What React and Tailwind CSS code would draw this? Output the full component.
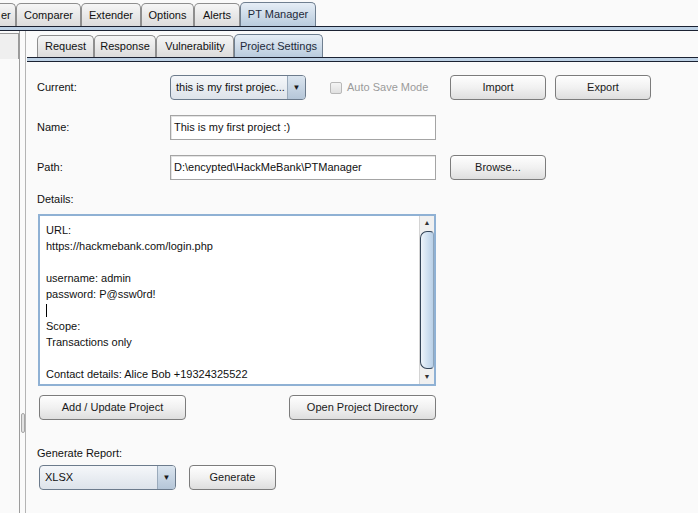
import React from "react";

const font = { fontFamily: '"Liberation Sans", Arial, sans-serif' };

function TopTab({ w, label, selected, first }) {
  return (
    <div
      className={
        "flex items-center border border-b-0 rounded-t-[5px] text-[11px] " +
        (selected
          ? "h-[24px] border-[#6f7f90] bg-gradient-to-b from-[#e6eef6] to-[#b9cbdd] text-[#1e2a3a]"
          : "h-[23px] border-[#8e8e8e] bg-gradient-to-b from-[#f6f6f6] to-[#dcdcdc] text-[#111]") +
        (first ? " justify-start pl-[1px] border-l-0 rounded-tl-none" : " justify-center")
      }
      style={{ width: w }}
    >
      {label}
    </div>
  );
}

function Band() {
  return <div className="h-[5px] border-y border-[#1b2232] bg-[#bdd1e5]" />;
}

function Button({ w, children }) {
  return (
    <div
      className="h-[25px] flex items-center justify-center rounded-[4px] border border-[#7c7c7c] bg-gradient-to-b from-[#fefefe] via-[#f1f1f1] to-[#dedede] text-[11px] text-[#1a1a1a] shadow-[inset_0_1px_0_#ffffff]"
      style={{ width: w }}
    >
      {children}
    </div>
  );
}

function Combo({ w, value }) {
  return (
    <div
      className="h-[25px] flex rounded-[4px] border border-[#6c7b8c] bg-gradient-to-b from-[#f5f7fa] to-[#dde3ea] text-[11px] text-[#111] overflow-hidden"
      style={{ width: w }}
    >
      <div className="flex-1 flex items-center pl-[5px]">{value}</div>
      <div className="w-[18px] flex items-center justify-center border-l border-[#9aaabb] bg-gradient-to-b from-[#dbe5ef] to-[#b5c6d8] text-[8px] text-[#1b1b1b]">
        ▼
      </div>
    </div>
  );
}

function Field({ w, value }) {
  return (
    <div
      className="h-[25px] flex items-center pl-[3px] border border-[#a4a4a4] bg-white text-[11px] text-[#111] shadow-[inset_1px_1px_0_#e4e4e4]"
      style={{ width: w }}
    >
      {value}
    </div>
  );
}

const detailLines = [
  "URL:",
  "https://hackmebank.com/login.php",
  "",
  "username: admin",
  "password: P@ssw0rd!",
  "__cursor__",
  "Scope:",
  "Transactions only",
  "",
  "Contact details: Alice Bob +19324325522",
];

function Details() {
  return (
    <div className="ml-[1px] w-[398px] h-[172px] flex border-2 border-[#8fb1d4] bg-white">
      <div className="flex-1 pt-[6px] pl-[6px] text-[11px] text-[#111] leading-[16px]">
        {detailLines.map((l, i) =>
          l === "__cursor__" ? (
            <div key={i} className="h-[16px] flex items-center">
              <div className="w-[1px] h-[13px] bg-black" />
            </div>
          ) : (
            <div key={i} className="h-[16px] whitespace-pre">
              {l}
            </div>
          )
        )}
      </div>
      <div className="w-[15px] flex flex-col bg-[#f0f0f0] border-l border-[#d4d4d4]">
        <div className="h-[14px] flex items-center justify-center text-[7px] text-[#333]">▲</div>
        <div className="flex-1 my-[1px] rounded-l-[7px] rounded-r-[4px] border border-[#35465a] border-r-[#8fa5bb] bg-gradient-to-r from-[#eef4fa] via-[#d2e2f2] to-[#b9d0e7]" />
        <div className="h-[14px] flex items-center justify-center text-[7px] text-[#333]">▼</div>
      </div>
    </div>
  );
}

export default function App() {
  return (
    <div className="w-[698px] h-[513px] overflow-hidden flex flex-col bg-[#fafafa]" style={font}>
      {/* main tool tabs */}
      <div className="h-[26px] flex items-end">
        <TopTab w={16} label="er" first />
        <TopTab w={65} label="Comparer" />
        <TopTab w={60} label="Extender" />
        <TopTab w={53} label="Options" />
        <TopTab w={46} label="Alerts" />
        <TopTab w={76} label="PT Manager" selected />
      </div>
      <Band />

      <div className="flex-1 flex min-h-0">
        {/* collapsed side panel + split divider */}
        <div className="w-[27px] flex shrink-0">
          <div className="w-[19px] pt-[2px]">
            <div className="h-[26px] border-t border-r border-[#9a9a9a] bg-[#efefef]" />
          </div>
          <div className="w-[1px] bg-[#9c9c9c]" />
          <div className="w-[5px] flex justify-center pt-[382px]">
            <div className="w-[4px] h-[20px] rounded-[2px] border border-[#a6a6a6] bg-[#e2e2e2]" />
          </div>
          <div className="w-[1px] bg-[#b4b4b4]" />
          <div className="w-[1px]" />
        </div>

        <div className="flex-1 flex flex-col min-w-0">
          {/* sub tabs */}
          <div className="h-[26px] flex items-end pl-[10px]">
            <div className="flex items-end">
              {[
                ["Request", 57],
                ["Response", 62],
                ["Vulnerability", 78],
                ["Project Settings", 89],
              ].map(([l, w]) => (
                <div
                  key={l}
                  className={
                    "flex items-center justify-center border border-b-0 rounded-t-[5px] text-[11px] " +
                    (l === "Project Settings"
                      ? "h-[23px] border-[#6f7f90] bg-gradient-to-b from-[#e6eef6] to-[#b9cbdd] text-[#1e2a3a]"
                      : "h-[22px] border-[#8e8e8e] bg-gradient-to-b from-[#f6f6f6] to-[#dcdcdc] text-[#111]")
                  }
                  style={{ width: w }}
                >
                  {l}
                </div>
              ))}
            </div>
          </div>
          <Band />

          {/* project settings form */}
          <div className="flex-1 pl-[10px] pt-[13px] flex flex-col text-[11px] text-[#111]">
            <div className="flex items-center h-[25px]">
              <div className="w-[133px]">Current:</div>
              <Combo w={136} value="this is my first projec..." />
              <div className="ml-[24px] w-[12px] h-[12px] rounded-[2px] border border-[#b8b8b8] bg-gradient-to-b from-[#f4f4f4] to-[#e0e0e0]" />
              <div className="ml-[5px] w-[103px] text-[#9b9b9b]">Auto Save Mode</div>
              <Button w={96}>Import</Button>
              <div className="w-[9px]" />
              <Button w={96}>Export</Button>
            </div>
            <div className="flex items-center h-[25px] mt-[15px]">
              <div className="w-[133px]">Name:</div>
              <Field w={266} value="This is my first project :)" />
            </div>
            <div className="flex items-center h-[25px] mt-[15px]">
              <div className="w-[133px]">Path:</div>
              <Field w={266} value="D:\encypted\HackMeBank\PTManager" />
              <div className="w-[14px]" />
              <Button w={96}>Browse...</Button>
            </div>
            <div className="mt-[12px] h-[14px] leading-[14px]">Details:</div>
            <div className="mt-[8px]">
              <Details />
            </div>
            <div className="mt-[9px] flex pl-[2px]">
              <Button w={147}>Add / Update Project</Button>
              <div className="w-[103px]" />
              <Button w={147}>Open Project Directory</Button>
            </div>
            <div className="mt-[26px] h-[14px] leading-[14px]">Generate Report:</div>
            <div className="mt-[5px] flex pl-[2px]">
              <Combo w={137} value="XLSX" />
              <div className="w-[13px]" />
              <Button w={87}>Generate</Button>
            </div>
          </div>
        </div>
      </div>
    </div>
  );
}
